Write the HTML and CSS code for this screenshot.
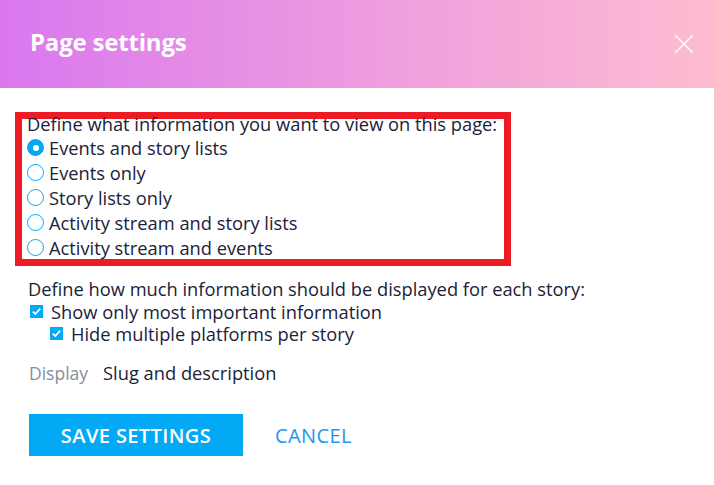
FILE: index.html
```html
<!DOCTYPE html>
<html lang="en">
<head>
<meta charset="utf-8">
<title>Page settings</title>
<link rel="stylesheet" href="styles.css">
</head>
<body>
<div class="dialog">
  <header class="header">
    <h1 class="title">Page settings</h1>
    <button class="close" aria-label="Close">
      <svg width="20" height="20" viewBox="0 0 20 20"><path d="M1 1 L19 19 M19 1 L1 19" stroke="#fff" stroke-width="1.4" fill="none"/></svg>
    </button>
  </header>
  <main class="content">
    <div class="view-box">
      <div class="legend">Define what information you want to view on this page:</div>
      <label class="radio-row"><span class="radio checked"></span><span>Events and story lists</span></label>
      <label class="radio-row"><span class="radio"></span><span>Events only</span></label>
      <label class="radio-row"><span class="radio"></span><span>Story lists only</span></label>
      <label class="radio-row"><span class="radio"></span><span>Activity stream and story lists</span></label>
      <label class="radio-row"><span class="radio"></span><span>Activity stream and events</span></label>
    </div>
    <div class="detail">
      <div class="detail-title">Define how much information should be displayed for each story:</div>
      <label class="check-row"><span class="check"><svg width="13" height="13" viewBox="0 0 13 13"><path d="M2.8 6.6 L5.3 9 L10.2 3.6" stroke="#fff" stroke-width="1.8" fill="none"/></svg></span><span>Show only most important information</span></label>
      <label class="check-row sub"><span class="check"><svg width="13" height="13" viewBox="0 0 13 13"><path d="M2.8 6.6 L5.3 9 L10.2 3.6" stroke="#fff" stroke-width="1.8" fill="none"/></svg></span><span>Hide multiple platforms per story</span></label>
    </div>
    <div class="display-row">
      <span class="display-label">Display</span>
      <span class="display-value">Slug and description</span>
    </div>
    <div class="actions">
      <button class="btn btn-primary">SAVE SETTINGS</button>
      <button class="btn btn-link">CANCEL</button>
    </div>
  </main>
</div>
</body>
</html>
```

FILE: styles.css
```css
html, body {
  margin: 0;
  padding: 0;
  background: #fff;
}
body {
  font-family: "Open Sans", "Noto Sans", "Liberation Sans", sans-serif;
  color: #1b2238;
  font-size: 18.3px;
}
.dialog {
  width: 714px;
  height: 485px;
  background: #fff;
}
.header {
  height: 88px;
  box-sizing: border-box;
  padding: 0 20px 0 30px;
  display: flex;
  align-items: center;
  justify-content: space-between;
  background: linear-gradient(to right, #da77ef 0%, #eb98e1 45%, #fdbcd0 100%);
}
.title {
  margin: 0;
  color: #fff;
  font-size: 24px;
  font-weight: 700;
  line-height: 32px;
  letter-spacing: -0.2px;
  margin-top: -4px;
}
.close {
  background: none;
  border: 0;
  padding: 0;
  width: 20px;
  height: 20px;
  display: block;
}
.close svg { display: block; }
.content {
  padding: 24px 0 0 0;
}
.view-box {
  margin-left: 15px;
  width: 496px;
  height: 154px;
  box-sizing: border-box;
  border: 7px solid #ed1c24;
  padding: 0 5px;
}
.legend {
  line-height: 18px;
  margin-top: -4px;
  margin-bottom: 2px;
  white-space: nowrap;
}
.radio-row {
  display: flex;
  align-items: center;
  height: 25px;
  gap: 5px;
}
.radio {
  width: 17px;
  height: 17px;
  box-sizing: border-box;
  border: 1.3px solid #03a9f4;
  border-radius: 50%;
  flex: none;
  position: relative;
}
.radio.checked {
  background: #03a9f4;
  border-color: #03a9f4;
}
.radio.checked::after {
  content: "";
  position: absolute;
  left: 50%;
  top: 50%;
  width: 6px;
  height: 6px;
  margin: -3px 0 0 -3px;
  border-radius: 50%;
  background: #fff;
}
.detail {
  margin-top: 12px;
  padding-left: 28px;
}
.detail-title {
  line-height: 22px;
  white-space: nowrap;
}
.check-row {
  display: flex;
  align-items: center;
  height: 22px;
  gap: 8px;
  padding-left: 2px;
}
.check-row.sub {
  padding-left: 22px;
}
.check {
  width: 13px;
  height: 13px;
  background: #03a9f4;
  flex: none;
}
.check svg { display: block; }
.display-row {
  margin-top: 18px;
  padding-left: 29px;
  line-height: 22px;
  display: flex;
  gap: 15px;
}
.display-label {
  color: #878d9c;
  font-size: 17.5px;
}
.actions {
  margin-top: 30px;
  padding-left: 29px;
  display: flex;
}
.btn {
  font-family: inherit;
  border: 0;
  height: 42px;
  padding: 0 32px;
  font-size: 20px;
  letter-spacing: 0.4px;
  cursor: pointer;
}
.btn-primary {
  background: #03a9f4;
  color: #fff;
  font-weight: 600;
  width: 214px;
  padding: 0;
}
.btn-link {
  background: none;
  color: #1e96ee;
  font-weight: 400;
}
```
